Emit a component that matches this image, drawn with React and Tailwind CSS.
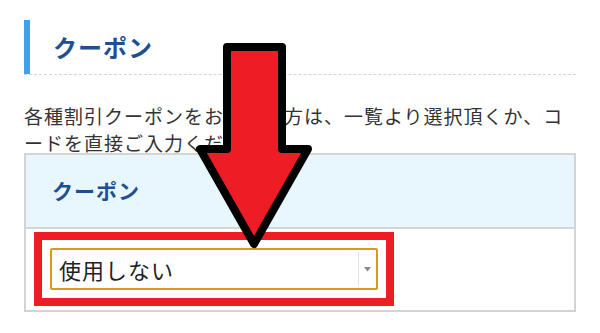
const jp = { fontFamily: '"Noto Sans CJK JP", "Noto Sans", sans-serif' };

function Arrow() {
  // annotation arrow drawn over the page
  return (
    <svg className="pointer-events-none absolute left-0 top-0" width="600" height="333" viewBox="0 0 600 333">
      <polygon
        points="227,47 282,47 282,149 308,149 254,244 200,149 227,149"
        fill="#ee1c25"
        stroke="#000"
        strokeWidth="8"
        strokeLinejoin="round"
      />
    </svg>
  );
}

export default function App() {
  return (
    <div className="relative h-[333px] w-[600px] overflow-hidden bg-white" style={jp}>
      <div className="px-6 pt-5">
        <div className="flex h-[55px] items-stretch border-b border-dashed border-[#cfd6dc]">
          <div className="w-[6px] bg-[#3fa0f0]" />
          <div className="flex items-center pl-[23px]">
            <h2 className="text-[24px] font-bold leading-none tracking-[1px] text-[#1f4f93]">クーポン</h2>
          </div>
        </div>

        <p className="mt-[27px] text-[19px] leading-[27px] tracking-[1px] text-[#333]">
          各種割引クーポンをお持ちの方は、一覧より選択頂くか、コードを直接ご入力ください。
        </p>

        <div className="-mt-[3px] border-2 border-[#d4d4d4]">
          <div className="flex h-[74px] items-center border-b-2 border-[#d4d4d4] bg-[#e8f7fd] pl-[26px]">
            <span className="text-[21px] font-bold tracking-[1px] text-[#1f4f93]">クーポン</span>
          </div>
          <div className="px-2 pb-[4px] pt-[3px]">
            <div className="w-[360px] border-8 border-[#ee1c25] px-2">
              <div className="my-[8px] flex h-[42px] w-[328px] items-center rounded-[2px] border-2 border-[#d89a1b] bg-white">
                <span className="flex-1 pl-[7px] text-[22px] tracking-[1px] text-[#222]">使用しない</span>
                <div className="flex h-[34px] w-[18px] items-center justify-center border-l border-[#d6e6ef]">
                  <svg width="7" height="5" viewBox="0 0 7 5">
                    <polygon points="0,0 7,0 3.5,4.5" fill="#8a8a8a" />
                  </svg>
                </div>
              </div>
            </div>
          </div>
        </div>
      </div>
      <Arrow />
    </div>
  );
}
